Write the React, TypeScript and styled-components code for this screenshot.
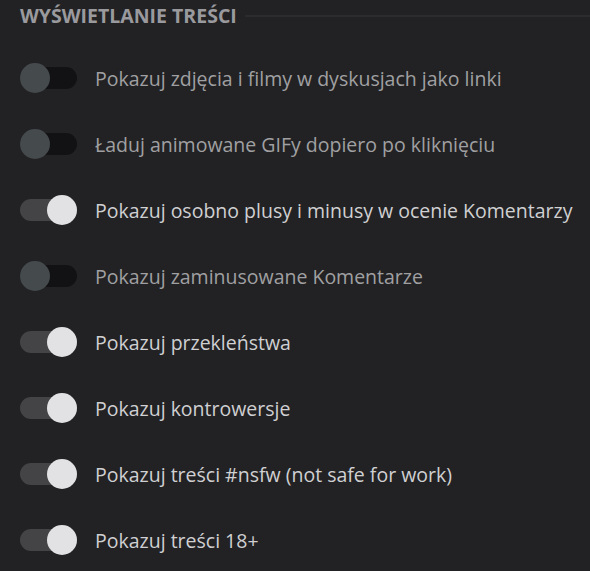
import { useState } from 'react'
import styled, { createGlobalStyle } from 'styled-components';

type Option = {
    id: string,
    label: string,
    enabled: boolean
}

const initialOptions: Option[] = [
    { id: 'media-links', label: 'Pokazuj zdjęcia i filmy w dyskusjach jako linki', enabled: false },
    { id: 'gif-click', label: 'Ładuj animowane GIFy dopiero po kliknięciu', enabled: false },
    { id: 'split-votes', label: 'Pokazuj osobno plusy i minusy w ocenie Komentarzy', enabled: true },
    { id: 'downvoted', label: 'Pokazuj zaminusowane Komentarze', enabled: false },
    { id: 'swears', label: 'Pokazuj przekleństwa', enabled: true },
    { id: 'controversy', label: 'Pokazuj kontrowersje', enabled: true },
    { id: 'nsfw', label: 'Pokazuj treści #nsfw (not safe for work)', enabled: true },
    { id: 'adult', label: 'Pokazuj treści 18+', enabled: true },
];

const App = () => {
    const [options, setOptions] = useState(initialOptions);

    const toggle = (id: string) => {
        setOptions(options.map(o => o.id === id ? { ...o, enabled: !o.enabled } : o));
    }

    return (
        <>
            <GlobalStyle />
            <Section>
                <Header>
                    <Title>Wyświetlanie treści</Title>
                    <Rule />
                </Header>
                <List>
                    { options.map(option =>
                        <Row key={option.id} onClick={() => toggle(option.id)}>
                            <Track $on={option.enabled}>
                                <Knob $on={option.enabled} />
                            </Track>
                            <Label $on={option.enabled}>{option.label}</Label>
                        </Row>
                    )}
                </List>
            </Section>
        </>
    )
}

const GlobalStyle = createGlobalStyle`
    html, body {
        margin: 0;
        padding: 0;
        background: #222224;
    }
    body {
        font-family: "Open Sans", "Liberation Sans", sans-serif;
    }
`;

const Section = styled.div`
    width: 590px;
    height: 571px;
    background: #222224;
    padding: 4px 0 0 20px;
    box-sizing: border-box;
    overflow: hidden;
`;

const Header = styled.div`
    display: flex;
    align-items: center;
    gap: 8px;
    height: 24px;
`;

const Title = styled.h2`
    margin: 0;
    font-size: 19.5px;
    font-weight: 700;
    text-transform: uppercase;
    color: #9a9a9e;
    white-space: nowrap;
    line-height: 24px;
`;

const Rule = styled.div`
    flex: 1;
    height: 2px;
    background: #2c2c2f;
`;

const List = styled.div`
    display: flex;
    flex-direction: column;
    gap: 36px;
    padding-top: 35px;
`;

const Row = styled.div`
    display: flex;
    align-items: center;
    height: 30px;
    cursor: pointer;
`;

const Track = styled.div<{ $on: boolean }>`
    position: relative;
    width: 57px;
    height: 22px;
    border-radius: 11px;
    background: ${props => props.$on ? '#444446' : '#121214'};
    flex-shrink: 0;
`;

const Knob = styled.div<{ $on: boolean }>`
    position: absolute;
    top: -4px;
    left: ${props => props.$on ? '27px' : '0'};
    width: 30px;
    height: 30px;
    border-radius: 50%;
    background: ${props => props.$on ? '#e2e2e4' : '#454a4d'};
`;

const Label = styled.span<{ $on: boolean }>`
    margin-left: 18px;
    font-size: 19.5px;
    color: ${props => props.$on ? '#d0d0d2' : '#a0a0a2'};
    white-space: nowrap;
`;

export default App;
